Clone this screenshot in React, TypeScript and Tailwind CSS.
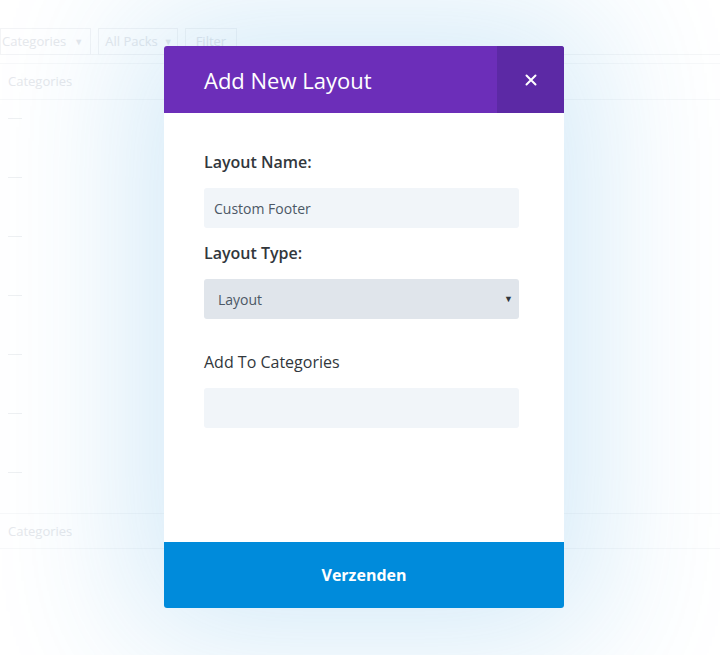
import React from "react";

const rows = [0, 1, 2, 3, 4, 5, 6];

export default function App() {
  return (
    <div className="relative w-[720px] h-[655px] overflow-hidden bg-white font-['Open_Sans',sans-serif]">
      {/* faded page behind the modal */}
      <div className="flex flex-col text-[13px] text-[#e6e8ec]">
        <div className="h-[28px]" />
        <div className="flex h-[27px] items-center gap-[7px] border-b border-[#f5f6f7]">
          <div className="flex h-[27px] items-center gap-[8px] border border-[#f3f4f6] pl-[1px] pr-[7px] pt-[1px]">
            <span>Categories</span>
            <span className="text-[9px]">▼</span>
          </div>
          <div className="flex h-[27px] items-center gap-[6px] border border-[#f3f4f6] pl-[6px] pr-[4px] pt-[1px]">
            <span>All Packs</span>
            <span className="text-[9px]">▼</span>
          </div>
          <div className="flex h-[27px] items-center justify-center border border-[#f3f4f6] px-[10px] pt-[1px]">
            <span>Filter</span>
          </div>
        </div>
        <div className="h-[9px] border-b border-[#f7f8f9]" />
        <div className="flex h-[36px] items-center border-b border-[#f7f8f9] pl-[8px] pt-[1px]">
          <span>Categories</span>
        </div>
        <div className="flex flex-col">
          {rows.map((r) => (
            <div key={r} className="flex h-[59px] items-start pl-[8px] pt-[18px]">
              <div className="h-px w-[14px] bg-[#eef0f2]" />
            </div>
          ))}
        </div>
        <div className="flex h-[36px] items-center border-y border-[#f7f8f9] pl-[8px] pt-[1px]">
          <span>Categories</span>
        </div>
      </div>

      {/* modal overlay */}
      <div className="absolute inset-0 flex justify-center pl-[8px] pt-[46px]">
        <div className="flex h-[562px] w-[400px] flex-col overflow-hidden rounded-[3px] bg-white shadow-[0_0_140px_30px_rgba(40,150,220,0.2)]">
          <div className="flex h-[67px] shrink-0 items-center bg-[#6c2eb9]">
            <h1 className="flex-1 pl-[40px] text-[22px] font-normal leading-none text-white">
              Add New Layout
            </h1>
            <button className="flex h-[67px] w-[67px] items-center justify-center bg-[#5c29a5] text-white">
              <svg width="12" height="12" viewBox="0 0 12 12" fill="none">
                <path d="M1.5 1.5L10.5 10.5M10.5 1.5L1.5 10.5" stroke="white" strokeWidth="2" strokeLinecap="round" />
              </svg>
            </button>
          </div>

          <div className="flex flex-1 flex-col pl-[40px] pr-[45px] pt-[38px]">
            <label className="text-[16px] font-semibold leading-[22px] text-[#32373c]">Layout Name:</label>
            <div className="mt-[15px] flex h-[40px] items-center rounded-[3px] bg-[#f1f5f9] pl-[10px] text-[14px] text-[#4c5866]">
              Custom Footer
            </div>
            <label className="mt-[14px] text-[16px] font-semibold leading-[22px] text-[#32373c]">Layout Type:</label>
            <div className="mt-[15px] flex h-[40px] items-center justify-between rounded-[3px] bg-[#e0e5eb] pl-[14px] pr-[6px] text-[14px] text-[#4c5866]">
              <span>Layout</span>
              <span className="text-[9px] text-[#32373c]">▼</span>
            </div>
            <label className="mt-[32px] text-[16px] font-medium leading-[22px] text-[#32373c]">Add To Categories</label>
            <div className="mt-[15px] h-[40px] rounded-[3px] bg-[#f1f5f9]" />
          </div>

          <button className="flex h-[66px] shrink-0 items-center justify-center bg-[#008bdb] text-[16px] font-bold text-white">
            Verzenden
          </button>
        </div>
      </div>
    </div>
  );
}
